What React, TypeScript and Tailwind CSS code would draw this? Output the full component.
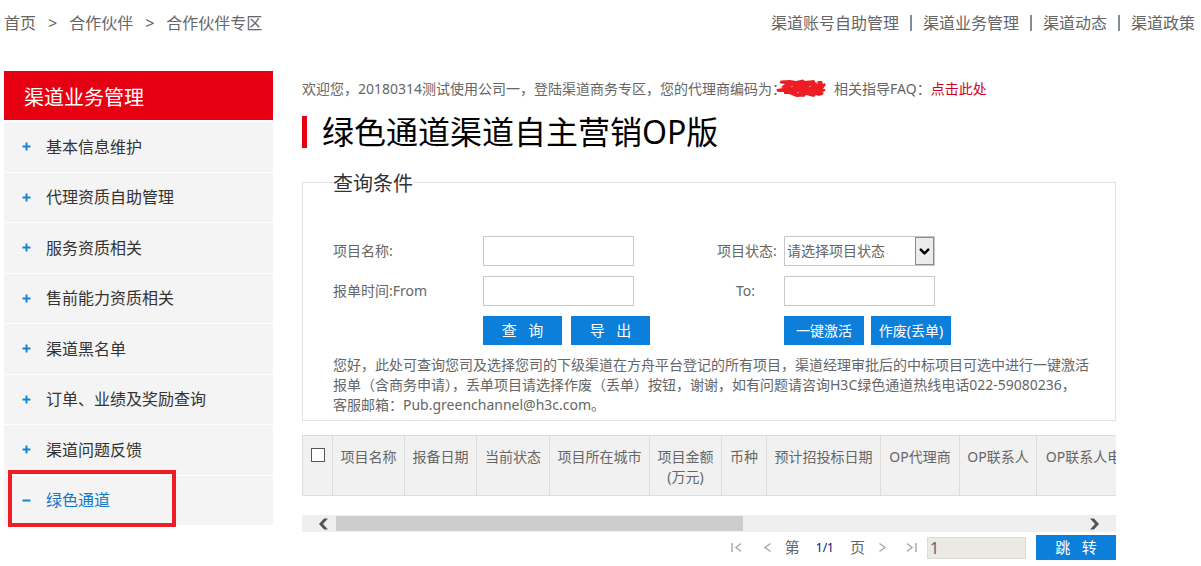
import { Fragment, useState } from 'react';
import { ChevronDown } from 'lucide-react';

const TOP_LINKS = ['渠道账号自助管理', '渠道业务管理', '渠道动态', '渠道政策'];

const BREADCRUMBS = ['首页', '合作伙伴', '合作伙伴专区'];

const MENU_ITEMS = [
  '基本信息维护',
  '代理资质自助管理',
  '服务资质相关',
  '售前能力资质相关',
  '渠道黑名单',
  '订单、业绩及奖励查询',
  '渠道问题反馈',
  '绿色通道',
];

const COLUMNS = [
  { label: '项目名称', width: 'w-[72px]' },
  { label: '报备日期', width: 'w-[72px]' },
  { label: '当前状态', width: 'w-[73px]' },
  { label: '项目所在城市', width: 'w-[100px]' },
  { label: '项目金额(万元)', width: 'w-[72px]' },
  { label: '币种', width: 'w-[45px]' },
  { label: '预计招投标日期', width: 'w-[114px]' },
  { label: 'OP代理商', width: 'w-[79px]' },
  { label: 'OP联系人', width: 'w-[77px]' },
  { label: 'OP联系人电话', width: 'w-[108px]' },
];

const NOTICE = [
  '您好，此处可查询您司及选择您司的下级渠道在方舟平台登记的所有项目，渠道经理审批后的中标项目可选中进行一键激活',
  '报单（含商务申请），丢单项目请选择作废（丢单）按钮，谢谢，如有问题请咨询H3C绿色通道热线电话022-59080236，',
  '客服邮箱：Pub.greenchannel@h3c.com。',
];

const BUTTON = 'h-[29px] shrink-0 whitespace-pre bg-[#0b7fd9] text-white hover:bg-[#0a70c0]';
const FIELD = 'h-[30px] w-[151px] border border-[#c8c8c8] bg-white px-1 outline-none';

function Header() {
  return (
    <header className="flex h-[46px] items-center justify-between pr-1.5 pl-1 text-base text-[#666]">
      <nav aria-label="面包屑" className="flex items-center gap-3">
        {BREADCRUMBS.map((item, i) => (
          <Fragment key={item}>
            {i > 0 && <span>&gt;</span>}
            <a href="#">{item}</a>
          </Fragment>
        ))}
      </nav>
      <nav aria-label="快捷入口" className="flex items-center">
        {TOP_LINKS.map((item, i) => (
          <Fragment key={item}>
            {i > 0 && <span className="mx-[11px] h-4 w-0.5 bg-[#858b90]" />}
            <a href="#">{item}</a>
          </Fragment>
        ))}
      </nav>
    </header>
  );
}

function Sidebar() {
  const active = '绿色通道';

  return (
    <aside className="w-[269px] shrink-0 pt-px">
      <h2 className="flex h-[49px] items-center bg-[#e60012] pt-1 pl-5 text-xl text-white">渠道业务管理</h2>
      <ul className="mt-px grid min-h-[404px] auto-rows-fr">
        {MENU_ITEMS.map((item) => {
          const open = item === active;
          return (
            <li key={item} className="relative border-t border-white bg-[#f4f4f4]">
              <a
                href="#"
                className={`flex h-full items-center pl-[18px] text-base ${open ? 'text-[#1478c8]' : 'text-[#333]'}`}
              >
                <svg viewBox="0 0 9 9" className="mr-[15px] size-[9px]" fill="#1583d0" aria-hidden="true">
                  <rect x="0.5" y="3.5" width="8" height="2" />
                  {!open && <rect x="3.5" y="0.5" width="2" height="8" />}
                </svg>
                {item}
              </a>
              {open && (
                <span className="pointer-events-none absolute -top-1.5 left-1 h-[57px] w-[168px] border-4 border-[#ee1c24]" />
              )}
            </li>
          );
        })}
      </ul>
    </aside>
  );
}

function Welcome() {
  return (
    <p className="flex h-5 items-center whitespace-nowrap">
      欢迎您，20180314测试使用公司一，登陆渠道商务专区，您的代理商编码为：
      {/* masked agent code */}
      <svg viewBox="0 0 50 20" className="-ml-2.5 h-5 w-[50px]" fill="#ee1c24" aria-hidden="true">
        <path d="M5 1.5 C4 2 3 4 5 4.5 L9 5 L5 8 L7 9 L1 10 C0 11 1 13 3 13 L8 13 L8 15 L13 15 L18 17 C22 19 24 17 28 18 L30 16 L38 18 L40 16 C44 18 47 16 48 14 L46 13 C48 13 50 12 49 10 L47 10 L49 7 C51 5 48 3 47 5 L46 2 L42 2 L40 4 L38 1 L29 2 L27 0.5 L20 2 L14 1 Z" />
        <path d="M15 8 L17 7 M33 8 L35 7 M42 3 L41 5 M21 14 L23 13" stroke="#fff" strokeWidth="0.5" fill="none" />
      </svg>
      <span className="ml-2">相关指导FAQ：</span>
      <a href="#" className="text-[#d0021b]">
        点击此处
      </a>
    </p>
  );
}

function QueryForm() {
  return (
    <form onSubmit={(e) => e.preventDefault()}>
      <fieldset className="mt-[19px] min-w-0 border border-[#e2e2e2] px-[30px] pb-[5px]">
        <legend className="h-[30px] text-xl leading-[34px] text-[#333]">查询条件</legend>
        <div className="mt-[39px] grid grid-cols-[150px_225px_75px_1fr] items-center gap-y-2.5">
          <label htmlFor="name">项目名称:</label>
          <input id="name" type="text" className={FIELD} />
          <label htmlFor="status" className="pl-[9px] whitespace-nowrap">
            项目状态:
          </label>
          <div className="relative ml-px w-[151px]">
            <select id="status" className="h-[30px] w-full appearance-none border border-[#c8c8c8] bg-white pl-0.5 outline-none">
              <option>请选择项目状态</option>
            </select>
            <span className="pointer-events-none absolute inset-y-px right-px flex w-[19px] items-center justify-center border border-[#8a8a8a] bg-[#ececec]">
              <ChevronDown size={15} strokeWidth={4} className="text-black" />
            </span>
          </div>

          <label htmlFor="from">报单时间:From</label>
          <input id="from" type="text" className={FIELD} />
          <label htmlFor="to" className="text-center">
            To:
          </label>
          <input id="to" type="text" className={`ml-px ${FIELD}`} />

          <div className="col-start-2 flex gap-[9px]">
            <button type="submit" className={`w-[79px] text-[15px] ${BUTTON}`}>{'查   询'}</button>
            <button type="button" className={`w-[79px] text-[15px] ${BUTTON}`}>{'导   出'}</button>
          </div>
          <div className="col-start-4 ml-px flex gap-[7px]">
            <button type="button" className={`w-20 ${BUTTON}`}>一键激活</button>
            <button type="button" className={`w-20 ${BUTTON}`}>作废(丢单)</button>
          </div>
        </div>
        <p className="mt-2.5 leading-5 whitespace-nowrap">
          {NOTICE.map((line) => (
            <span key={line} className="block">
              {line}
            </span>
          ))}
        </p>
      </fieldset>
    </form>
  );
}

function ResultTable() {
  return (
    <>
      <div className="mt-3.5 overflow-hidden">
        <table className="w-[842px] table-fixed border-collapse bg-[#f1f1f1]">
          <thead>
            <tr className="h-[60px] align-top">
              <th className="w-[30px] border border-[#dcdcdc] pt-3">
                <input
                  type="checkbox"
                  aria-label="全选"
                  className="mx-auto block size-3.5 appearance-none border border-[#555] bg-white checked:bg-[#0b7fd9]"
                />
              </th>
              {COLUMNS.map(({ label, width }) => (
                <th key={label} className={`${width} border border-[#dcdcdc] px-[7px] pt-[11px] leading-5 font-normal`}>
                  {label}
                </th>
              ))}
            </tr>
          </thead>
        </table>
      </div>

      <div className="mt-[19px] flex h-[17px] items-center bg-[#efefef] text-[#555]">
        <button type="button" aria-label="向左滚动" className="flex w-[34px] justify-end pr-[7px]">
          <svg viewBox="0 0 11 12" className="h-3 w-[11px]" fill="currentColor" aria-hidden="true">
            <path d="M6 0.5H10L5 6L10 11.5H6L1 6Z" />
          </svg>
        </button>
        <div className="flex-1">
          <div className="h-[15px] w-6/11 bg-[#cdcdcd]" />
        </div>
        <button type="button" aria-label="向右滚动" className="flex w-[34px] pl-[7px]">
          <svg viewBox="0 0 11 12" className="h-3 w-[11px]" fill="currentColor" aria-hidden="true">
            <path d="M5 0.5H1L6 6L1 11.5H5L10 6Z" />
          </svg>
        </button>
      </div>
    </>
  );
}

interface PagerButtonProps {
  label: string;
  path: string;
}

function PagerButton({ label, path }: PagerButtonProps) {
  return (
    <button type="button" aria-label={label} className="text-[#aaa]">
      <svg viewBox="0 0 11 11" className="size-[11px]" fill="none" stroke="currentColor" strokeWidth="1.5" aria-hidden="true">
        <path d={path} />
      </svg>
    </button>
  );
}

function Pagination() {
  const [page, setPage] = useState('1');

  return (
    <div className="mt-[3px] flex items-center justify-end text-base">
      <div className="mr-2.5 flex items-center">
        <PagerButton label="首页" path="M1 1V10M10 1.5L5 5.5L10 9.5" />
        <span className="w-5" />
        <PagerButton label="上一页" path="M8.5 1.5L3 5.5L8.5 9.5" />
        <span className="mx-3 text-[15px]">第</span>
        <span className="mx-1 text-xs text-[#00108c]">1/1</span>
        <span className="mx-3 text-[15px]">页</span>
        <PagerButton label="下一页" path="M2.5 1.5L8 5.5L2.5 9.5" />
        <span className="w-[18px]" />
        <PagerButton label="末页" path="M1 1.5L6 5.5L1 9.5M10 1V10" />
      </div>
      <input
        type="text"
        aria-label="页码"
        value={page}
        onChange={(e) => setPage(e.target.value)}
        className="mr-2.5 h-[22px] w-[99px] border border-[#dcdcd8] bg-[#ebe9e4] px-0.5 outline-none"
      />
      <button type="button" className="h-[25px] w-20 bg-[#0b7fd9] text-[15px] whitespace-pre text-white">{'跳   转'}</button>
    </div>
  );
}

export default function App() {
  return (
    <div className="min-h-screen bg-white font-['Noto_Sans','Noto_Sans_CJK_SC',sans-serif] text-sm text-[#666]">
      <Header />
      <div className="flex pt-6 pr-[85px] pl-1">
        <Sidebar />
        <main className="ml-[29px] min-w-0 flex-1 pt-[9px]">
          <Welcome />
          <h1 className="mt-[17px] flex h-8 items-center border-l-[5px] border-[#e60012] pl-[15px] text-[32px] text-black">
            绿色通道渠道自主营销OP版
          </h1>
          <QueryForm />
          <ResultTable />
          <Pagination />
        </main>
      </div>
    </div>
  );
}
